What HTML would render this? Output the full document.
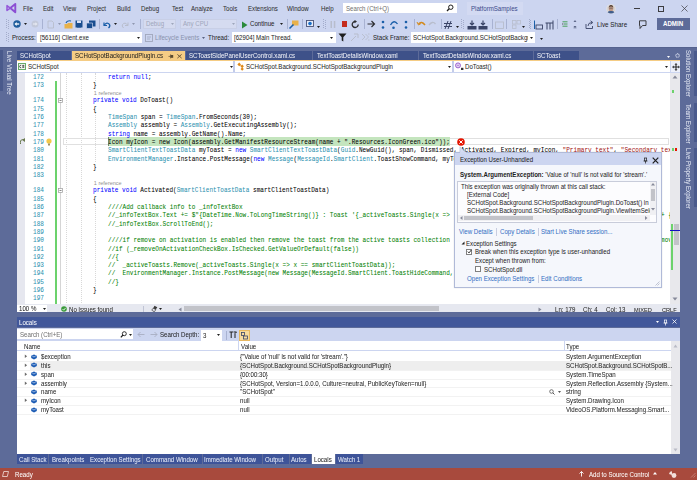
<!DOCTYPE html>
<html><head><meta charset="utf-8"><style>
html,body{margin:0;padding:0;}
body{width:697px;height:480px;position:relative;overflow:hidden;background:#5D6B99;font-family:"Liberation Sans", sans-serif;}
.t{position:absolute;white-space:pre;line-height:1;font-family:"Liberation Sans", sans-serif;transform:scaleX(0.915);transform-origin:0 50%;-webkit-text-stroke:0.03px;}
.v{position:absolute;white-space:pre;line-height:1;font-family:"Liberation Sans", sans-serif;writing-mode:vertical-rl;transform:scaleY(0.92);transform-origin:50% 0;}
.m{position:absolute;white-space:pre;line-height:1;font-family:"Liberation Mono", monospace;transform:scaleX(0.93);transform-origin:0 50%;-webkit-text-stroke:0.04px;}
svg{overflow:visible}
</style></head><body><div style="position:absolute;left:0;top:0;width:697px;height:480px;filter:blur(0.25px)">
<div style="position:absolute;left:0px;top:0px;width:697px;height:47px;background:#CCD5F0;"></div>
<svg style="position:absolute;left:0px;top:0px;" width="20" height="16" viewBox="0 0 20 16"><path d="M15.3 3.9 L15.3 12.2 L10.3 8.05 Z" fill="none" stroke="#8C4FD3" stroke-width="1.9" stroke-linejoin="round"/><path d="M7 5.6 L7 10.5 L10.3 8.05 Z" fill="none" stroke="#9457DA" stroke-width="1.5" stroke-linejoin="round"/></svg>
<div class="t" style="left:23.1px;top:5.99px;font-size:6.70px;color:#2E2E2E;">File</div>
<div class="t" style="left:42.7px;top:5.99px;font-size:6.70px;color:#2E2E2E;">Edit</div>
<div class="t" style="left:63.3px;top:5.99px;font-size:6.70px;color:#2E2E2E;">View</div>
<div class="t" style="left:87.2px;top:5.99px;font-size:6.70px;color:#2E2E2E;">Project</div>
<div class="t" style="left:116.8px;top:5.99px;font-size:6.70px;color:#2E2E2E;">Build</div>
<div class="t" style="left:141.2px;top:5.99px;font-size:6.70px;color:#2E2E2E;">Debug</div>
<div class="t" style="left:172.4px;top:5.99px;font-size:6.70px;color:#2E2E2E;">Test</div>
<div class="t" style="left:191.3px;top:5.99px;font-size:6.70px;color:#2E2E2E;">Analyze</div>
<div class="t" style="left:223.2px;top:5.99px;font-size:6.70px;color:#2E2E2E;">Tools</div>
<div class="t" style="left:247.9px;top:5.99px;font-size:6.70px;color:#2E2E2E;">Extensions</div>
<div class="t" style="left:286.8px;top:5.99px;font-size:6.70px;color:#2E2E2E;">Window</div>
<div class="t" style="left:320.5px;top:5.99px;font-size:6.70px;color:#2E2E2E;">Help</div>
<div style="position:absolute;left:343px;top:3px;width:114px;height:10px;background:#FFFFFF;"></div>
<div class="t" style="left:346px;top:5.79px;font-size:6.70px;color:#717171;">Search (Ctrl+Q)</div>
<svg style="position:absolute;left:446px;top:4px;" width="8" height="8" viewBox="0 0 8 8"><circle cx="4.8" cy="3.2" r="2.2" fill="none" stroke="#1E1E1E" stroke-width="1"/><path d="M3.2 4.8 L1 7" stroke="#1E1E1E" stroke-width="1.3"/></svg>
<div style="position:absolute;left:466.5px;top:2px;width:56.2px;height:12.8px;background:#D3DAF2;"></div>
<div class="t" style="left:470.5px;top:5.99px;font-size:6.70px;color:#3D4C8C;">PlatformSamples</div>
<svg style="position:absolute;left:606px;top:3.5px;" width="10" height="10" viewBox="0 0 10 10"><circle cx="5" cy="5" r="4.8" fill="#E4E2E6"/><circle cx="5" cy="5" r="4.3" fill="#D8D4D2"/><ellipse cx="5" cy="4.6" rx="2.3" ry="3" fill="#BE9886"/><path d="M2.6 3.6 Q2.8 0.8 5 0.9 Q7.3 0.8 7.4 3.6 Q6.5 2.2 5 2.4 Q3.5 2.2 2.6 3.6 Z" fill="#4A382E"/><path d="M3.3 4.2 L6.7 4.2" stroke="#3A3A3A" stroke-width="0.5"/><path d="M1.6 8.3 Q2.5 6.8 5 7.1 Q7.5 6.8 8.4 8.3 Q6.9 9.6 5 9.6 Q3.1 9.6 1.6 8.3 Z" fill="#3F5D8C"/></svg>
<div style="position:absolute;left:634px;top:8px;width:6px;height:0.7px;background:#3C3C40;"></div>
<div style="position:absolute;left:658px;top:5.5px;width:6px;height:6px;background:none;border:0.7px solid #3C3C40;box-sizing:border-box"></div>
<svg style="position:absolute;left:681px;top:5px;" width="7" height="7" viewBox="0 0 7 7"><path d="M0.5 0.5 L6.5 6.5 M6.5 0.5 L0.5 6.5" stroke="#3C3C40" stroke-width="0.7"/></svg>
<div style="position:absolute;left:6px;top:19px;width:0.9px;height:0.9px;background:#A3ACCB;"></div>
<div style="position:absolute;left:7.5px;top:20px;width:0.9px;height:0.9px;background:#A3ACCB;"></div>
<div style="position:absolute;left:6px;top:21px;width:0.9px;height:0.9px;background:#A3ACCB;"></div>
<div style="position:absolute;left:7.5px;top:22px;width:0.9px;height:0.9px;background:#A3ACCB;"></div>
<div style="position:absolute;left:6px;top:23px;width:0.9px;height:0.9px;background:#A3ACCB;"></div>
<div style="position:absolute;left:7.5px;top:24px;width:0.9px;height:0.9px;background:#A3ACCB;"></div>
<div style="position:absolute;left:6px;top:25px;width:0.9px;height:0.9px;background:#A3ACCB;"></div>
<div style="position:absolute;left:7.5px;top:26px;width:0.9px;height:0.9px;background:#A3ACCB;"></div>
<div style="position:absolute;left:6px;top:27px;width:0.9px;height:0.9px;background:#A3ACCB;"></div>
<div style="position:absolute;left:7.5px;top:28px;width:0.9px;height:0.9px;background:#A3ACCB;"></div>
<svg style="position:absolute;left:12.8px;top:20.2px;" width="8" height="8" viewBox="0 0 8 8"><circle cx="4" cy="4" r="3.7" fill="#1F5C9C"/><path d="M6.2 4 L3 4" stroke="#fff" stroke-width="1.3"/><path d="M1.5 4 L3.6 2 L3.6 6 Z" fill="#fff"/></svg>
<svg style="position:absolute;left:24.0px;top:23px;" width="3" height="2" viewBox="0 0 3 2"><path d="M0 0 L3 0 L1.5 2 Z" fill="#1E1E1E"/></svg>
<svg style="position:absolute;left:30.5px;top:20.2px;" width="8" height="8" viewBox="0 0 8 8"><circle cx="4" cy="4" r="3.5" fill="#C3C9DA"/><path d="M2 4 L5 4" stroke="#E6E9F2" stroke-width="1.2"/><path d="M6.5 4 L4.4 2.2 L4.4 5.8 Z" fill="#E6E9F2"/></svg>
<div style="position:absolute;left:41.5px;top:19px;width:1px;height:10px;background:#A8B2D2;"></div>
<svg style="position:absolute;left:47px;top:20px;" width="7" height="9" viewBox="0 0 7 9"><path d="M1 1 L5 1 L6.5 2.5 L6.5 8 L1 8 Z" fill="none" stroke="#B8BDCC" stroke-width="0.9"/></svg>
<svg style="position:absolute;left:57.9px;top:23px;" width="3" height="2" viewBox="0 0 3 2"><path d="M0 0 L3 0 L1.5 2 Z" fill="#9098B0"/></svg>
<svg style="position:absolute;left:64px;top:19.5px;" width="9" height="9" viewBox="0 0 9 9"><path d="M0.5 4 L3 4 L4 3 L8.5 3 L8.5 8.5 L0.5 8.5 Z" fill="#E8B14A"/><path d="M2 3 Q3 0 7 1" stroke="#1A5FA8" stroke-width="1.2" fill="none"/></svg>
<svg style="position:absolute;left:75px;top:20px;" width="8" height="8" viewBox="0 0 8 8"><path d="M0.5 0.5 L7.5 0.5 L7.5 7.5 L0.5 7.5 Z" fill="#1A4E8F"/><rect x="2" y="0.5" width="4" height="2.5" fill="#DDE3F5"/><rect x="2" y="5" width="4" height="2.5" fill="#1A4E8F"/></svg>
<svg style="position:absolute;left:86px;top:19.5px;" width="10" height="9" viewBox="0 0 10 9"><path d="M3 0.5 L9.5 0.5 L9.5 6.5 L3 6.5 Z" fill="#1A4E8F"/><path d="M0.5 3 L6.5 3 L6.5 8.5 L0.5 8.5 Z" fill="#1A4E8F" stroke="#DDE3F5" stroke-width="0.6"/></svg>
<div style="position:absolute;left:98.5px;top:19px;width:1px;height:10px;background:#A8B2D2;"></div>
<svg style="position:absolute;left:102px;top:20px;" width="9" height="9" viewBox="0 0 9 9"><path d="M2 2.5 L2 5.5 L5 5.5" stroke="#1A5FA8" stroke-width="1.2" fill="none"/><path d="M2.2 5.2 Q5 1.5 7.5 4.5 Q8.5 6 6.5 8" stroke="#1A5FA8" stroke-width="1.3" fill="none"/></svg>
<svg style="position:absolute;left:114.2px;top:23px;" width="3" height="2" viewBox="0 0 3 2"><path d="M0 0 L3 0 L1.5 2 Z" fill="#1E1E1E"/></svg>
<svg style="position:absolute;left:121px;top:20px;" width="9" height="9" viewBox="0 0 9 9"><path d="M7 2.5 L7 5.5 L4 5.5" stroke="#B8BDCC" stroke-width="1" fill="none"/><path d="M6.8 5.2 Q4 1.5 1.5 4.5 Q0.5 6 2.5 8" stroke="#B8BDCC" stroke-width="1" fill="none"/></svg>
<svg style="position:absolute;left:132.3px;top:23px;" width="3" height="2" viewBox="0 0 3 2"><path d="M0 0 L3 0 L1.5 2 Z" fill="#9098B0"/></svg>
<div style="position:absolute;left:139.7px;top:19px;width:1px;height:10px;background:#A8B2D2;"></div>
<div style="position:absolute;left:143px;top:18.5px;width:33px;height:10.5px;background:#D5DBF0;border:0.6px solid #C8CFE6;box-sizing:border-box"></div>
<div class="t" style="left:146px;top:21.39px;font-size:6.70px;color:#A0A7BC;">Debug</div>
<svg style="position:absolute;left:170.5px;top:23px;" width="3" height="2" viewBox="0 0 3 2"><path d="M0 0 L3 0 L1.5 2 Z" fill="#A0A7BC"/></svg>
<div style="position:absolute;left:180px;top:18.5px;width:57px;height:10.5px;background:#D5DBF0;border:0.6px solid #C8CFE6;box-sizing:border-box"></div>
<div class="t" style="left:183px;top:21.39px;font-size:6.70px;color:#A0A7BC;">Any CPU</div>
<svg style="position:absolute;left:231.5px;top:23px;" width="3" height="2" viewBox="0 0 3 2"><path d="M0 0 L3 0 L1.5 2 Z" fill="#A0A7BC"/></svg>
<svg style="position:absolute;left:241px;top:20.5px;" width="7" height="8" viewBox="0 0 7 8"><path d="M1 0.5 L6.5 4 L1 7.5 Z" fill="#2A8A3A"/></svg>
<div class="t" style="left:250px;top:21.39px;font-size:6.70px;color:#1E1E1E;">Continue</div>
<svg style="position:absolute;left:280.1px;top:23px;" width="3" height="2" viewBox="0 0 3 2"><path d="M0 0 L3 0 L1.5 2 Z" fill="#1E1E1E"/></svg>
<div style="position:absolute;left:286.6px;top:19px;width:1px;height:10px;background:#A8B2D2;"></div>
<svg style="position:absolute;left:289px;top:19.5px;" width="10" height="9" viewBox="0 0 10 9"><rect x="3" y="0.5" width="6.5" height="5" fill="#E8B14A"/><path d="M0.5 8.5 L4.5 4.5" stroke="#1A5FA8" stroke-width="1.6"/></svg>
<div style="position:absolute;left:302px;top:19px;width:1px;height:10px;background:#A8B2D2;"></div>
<svg style="position:absolute;left:305.5px;top:20px;" width="8" height="7" viewBox="0 0 8 7"><rect x="0.5" y="0.5" width="7" height="6" fill="#E9EDF8" stroke="#4A5478" stroke-width="0.9"/><circle cx="4" cy="3.6" r="1.8" fill="#1A6FC8"/></svg>
<svg style="position:absolute;left:317.1px;top:26px;" width="3" height="2" viewBox="0 0 3 2"><path d="M0 0 L3 0 L1.5 2 Z" fill="#1E1E1E"/></svg>
<div style="position:absolute;left:323px;top:19px;width:0.9px;height:0.9px;background:#A3ACCB;"></div>
<div style="position:absolute;left:324.5px;top:20px;width:0.9px;height:0.9px;background:#A3ACCB;"></div>
<div style="position:absolute;left:323px;top:21px;width:0.9px;height:0.9px;background:#A3ACCB;"></div>
<div style="position:absolute;left:324.5px;top:22px;width:0.9px;height:0.9px;background:#A3ACCB;"></div>
<div style="position:absolute;left:323px;top:23px;width:0.9px;height:0.9px;background:#A3ACCB;"></div>
<div style="position:absolute;left:324.5px;top:24px;width:0.9px;height:0.9px;background:#A3ACCB;"></div>
<div style="position:absolute;left:323px;top:25px;width:0.9px;height:0.9px;background:#A3ACCB;"></div>
<div style="position:absolute;left:324.5px;top:26px;width:0.9px;height:0.9px;background:#A3ACCB;"></div>
<div style="position:absolute;left:323px;top:27px;width:0.9px;height:0.9px;background:#A3ACCB;"></div>
<div style="position:absolute;left:324.5px;top:28px;width:0.9px;height:0.9px;background:#A3ACCB;"></div>
<svg style="position:absolute;left:330px;top:20.5px;" width="6" height="7" viewBox="0 0 6 7"><rect x="0.5" y="0" width="1.5" height="7" fill="#B8BDCC"/><rect x="3.8" y="0" width="1.5" height="7" fill="#B8BDCC"/></svg>
<div style="position:absolute;left:341.5px;top:21px;width:5.5px;height:5.5px;background:#C42B1C;"></div>
<svg style="position:absolute;left:351px;top:19.5px;" width="9" height="9" viewBox="0 0 9 9"><path d="M7.2 4.5 A3 3 0 1 1 4.5 1.5" stroke="#2D2D30" stroke-width="1.3" fill="none"/><path d="M3.5 0 L6 1.6 L3.5 3.2 Z" fill="#2D2D30"/></svg>
<div style="position:absolute;left:363.9px;top:19px;width:1px;height:10px;background:#A8B2D2;"></div>
<svg style="position:absolute;left:367px;top:20px;" width="9" height="8" viewBox="0 0 9 8"><path d="M0.5 4 L7.5 4 M4.5 1 L7.5 4 L4.5 7" stroke="#2D2D30" stroke-width="1.2" fill="none"/></svg>
<svg style="position:absolute;left:380px;top:19.5px;" width="6" height="10" viewBox="0 0 6 10"><circle cx="3" cy="2" r="1.3" fill="#1A5FA8"/><circle cx="3" cy="7.5" r="1.3" fill="#1A5FA8"/></svg>
<svg style="position:absolute;left:389px;top:19.5px;" width="10" height="10" viewBox="0 0 10 10"><path d="M1.5 5 Q5 -1 8.5 4" stroke="#1A5FA8" stroke-width="1.3" fill="none"/><circle cx="4.5" cy="7.8" r="1.3" fill="#1A5FA8"/></svg>
<svg style="position:absolute;left:402.5px;top:19.5px;" width="6" height="10" viewBox="0 0 6 10"><circle cx="3" cy="2" r="1.3" fill="#1A5FA8"/><circle cx="3" cy="7.5" r="1.3" fill="#1A5FA8"/></svg>
<div style="position:absolute;left:413.8px;top:19px;width:1px;height:10px;background:#A8B2D2;"></div>
<svg style="position:absolute;left:417px;top:20px;" width="9" height="8" viewBox="0 0 9 8"><path d="M1.5 4 Q4.5 0.5 8 5" stroke="#D38A1E" stroke-width="1.5" fill="none"/><path d="M0 2 L1.5 5 L4 3.5" stroke="#D38A1E" stroke-width="1" fill="none"/></svg>
<svg style="position:absolute;left:428px;top:20px;" width="9" height="8" viewBox="0 0 9 8"><path d="M7.5 4 Q4.5 0.5 1 5" stroke="#B8BDCC" stroke-width="1.3" fill="none"/></svg>
<div style="position:absolute;left:440.5px;top:19px;width:1px;height:10px;background:#A8B2D2;"></div>
<svg style="position:absolute;left:443px;top:19.5px;" width="10" height="10" viewBox="0 0 10 10"><path d="M2 9 L5 1 M5 9 L8 1 M1 3.5 L9 3.5 M1 6.5 L9 6.5" stroke="#3A4466" stroke-width="1"/></svg>
<svg style="position:absolute;left:456.2px;top:26px;" width="3" height="2" viewBox="0 0 3 2"><path d="M0 0 L3 0 L1.5 2 Z" fill="#1E1E1E"/></svg>
<div style="position:absolute;left:461px;top:19px;width:0.9px;height:0.9px;background:#A3ACCB;"></div>
<div style="position:absolute;left:462.5px;top:20px;width:0.9px;height:0.9px;background:#A3ACCB;"></div>
<div style="position:absolute;left:461px;top:21px;width:0.9px;height:0.9px;background:#A3ACCB;"></div>
<div style="position:absolute;left:462.5px;top:22px;width:0.9px;height:0.9px;background:#A3ACCB;"></div>
<div style="position:absolute;left:461px;top:23px;width:0.9px;height:0.9px;background:#A3ACCB;"></div>
<div style="position:absolute;left:462.5px;top:24px;width:0.9px;height:0.9px;background:#A3ACCB;"></div>
<div style="position:absolute;left:461px;top:25px;width:0.9px;height:0.9px;background:#A3ACCB;"></div>
<div style="position:absolute;left:462.5px;top:26px;width:0.9px;height:0.9px;background:#A3ACCB;"></div>
<div style="position:absolute;left:461px;top:27px;width:0.9px;height:0.9px;background:#A3ACCB;"></div>
<div style="position:absolute;left:462.5px;top:28px;width:0.9px;height:0.9px;background:#A3ACCB;"></div>
<svg style="position:absolute;left:467px;top:19.5px;" width="10" height="10" viewBox="0 0 10 10"><rect x="0.5" y="6" width="9" height="3.5" fill="#3A4466"/><path d="M5 0.5 L5 5 M3 3 L5 5 L7 3" stroke="#3A4466" stroke-width="1.2" fill="none"/></svg>
<svg style="position:absolute;left:478px;top:19.5px;" width="10" height="10" viewBox="0 0 10 10"><rect x="0.5" y="6" width="9" height="3.5" fill="#3A4466"/><path d="M5 0.5 L5 5 M3 3 L5 5 L7 3" stroke="#3A4466" stroke-width="1.2" fill="none"/></svg>
<div style="position:absolute;left:492px;top:19px;width:1px;height:10px;background:#A8B2D2;"></div>
<svg style="position:absolute;left:495px;top:20px;" width="9" height="9" viewBox="0 0 9 9"><rect x="0.5" y="2" width="8" height="6.5" fill="none" stroke="#B8BDCC" stroke-width="0.9"/></svg>
<div style="position:absolute;left:505.6px;top:19px;width:1px;height:10px;background:#A8B2D2;"></div>
<svg style="position:absolute;left:512px;top:20px;" width="9" height="9" viewBox="0 0 9 9"><rect x="0.5" y="0.5" width="3.5" height="3.5" fill="none" stroke="#B8BDCC" stroke-width="0.8"/><rect x="5" y="0.5" width="3.5" height="3.5" fill="none" stroke="#B8BDCC" stroke-width="0.8"/><rect x="0.5" y="5" width="3.5" height="3.5" fill="none" stroke="#B8BDCC" stroke-width="0.8"/></svg>
<svg style="position:absolute;left:522.3px;top:26px;" width="3" height="2" viewBox="0 0 3 2"><path d="M0 0 L3 0 L1.5 2 Z" fill="#1E1E1E"/></svg>
<div style="position:absolute;left:528.5px;top:19px;width:0.9px;height:0.9px;background:#A3ACCB;"></div>
<div style="position:absolute;left:530.0px;top:20px;width:0.9px;height:0.9px;background:#A3ACCB;"></div>
<div style="position:absolute;left:528.5px;top:21px;width:0.9px;height:0.9px;background:#A3ACCB;"></div>
<div style="position:absolute;left:530.0px;top:22px;width:0.9px;height:0.9px;background:#A3ACCB;"></div>
<div style="position:absolute;left:528.5px;top:23px;width:0.9px;height:0.9px;background:#A3ACCB;"></div>
<div style="position:absolute;left:530.0px;top:24px;width:0.9px;height:0.9px;background:#A3ACCB;"></div>
<div style="position:absolute;left:528.5px;top:25px;width:0.9px;height:0.9px;background:#A3ACCB;"></div>
<div style="position:absolute;left:530.0px;top:26px;width:0.9px;height:0.9px;background:#A3ACCB;"></div>
<div style="position:absolute;left:528.5px;top:27px;width:0.9px;height:0.9px;background:#A3ACCB;"></div>
<div style="position:absolute;left:530.0px;top:28px;width:0.9px;height:0.9px;background:#A3ACCB;"></div>
<svg style="position:absolute;left:533px;top:19.5px;" width="10" height="10" viewBox="0 0 10 10"><path d="M1.5 0.5 L1.5 9" stroke="#1A5FA8" stroke-width="1"/><rect x="3" y="5" width="6.5" height="4" fill="none" stroke="#3A4466" stroke-width="0.9"/></svg>
<svg style="position:absolute;left:545px;top:19.5px;" width="10" height="10" viewBox="0 0 10 10"><path d="M0.5 3 L8 3 M2 3 L2 9.5 M5 3 L5 9.5 M8 0.5 L8 9.5" stroke="#3A4466" stroke-width="1"/></svg>
<div style="position:absolute;left:556.8px;top:19px;width:1px;height:10px;background:#A8B2D2;"></div>
<svg style="position:absolute;left:562px;top:21px;" width="6" height="6" viewBox="0 0 6 6"><path d="M0.5 0.8 L5.5 0.8 M2 3 L5.5 3 M0.5 5.2 L5.5 5.2" stroke="#3A9A4A" stroke-width="0.9"/><path d="M0.5 2 L1.6 3 L0.5 4 Z" fill="#333"/></svg>
<svg style="position:absolute;left:572.5px;top:20px;" width="4" height="9" viewBox="0 0 4 9"><path d="M0.5 1.8 L3.5 1.8 L2 0.3 Z M0.5 6.2 L3.5 6.2 L2 7.7 Z" fill="#3A4466"/><path d="M0.5 7.9 L3.5 7.9" stroke="#3A4466" stroke-width="0.5"/></svg>
<svg style="position:absolute;left:585px;top:19.5px;" width="9" height="9" viewBox="0 0 9 9"><path d="M1 4 L1 8.5 L7.5 8.5 L7.5 6" stroke="#3A4466" stroke-width="0.9" fill="none"/><path d="M3 6 Q3 2.5 7 2.5 M5.5 0.8 L7.8 2.5 L5.5 4.2" stroke="#3A4466" stroke-width="0.9" fill="none"/></svg>
<div class="t" style="left:597px;top:21.71px;font-size:6.92px;color:#1E1E1E;">Live Share</div>
<svg style="position:absolute;left:636.5px;top:19.5px;" width="10" height="10" viewBox="0 0 10 10"><path d="M2.5 0.8 L9 0.8 L9 5.5 L5.5 5.5 L3 8.5 L3 5.5 L2.5 5.5 Z" fill="none" stroke="#2D2D30" stroke-width="0.9"/></svg>
<div style="position:absolute;left:657px;top:18px;width:32.5px;height:11.5px;background:#5D6B99;"></div>
<div class="t" style="left:662.5px;top:21.49px;font-size:6.70px;color:#FFFFFF;font-weight:bold">ADMIN</div>
<div style="position:absolute;left:6px;top:32px;width:0.9px;height:0.9px;background:#A3ACCB;"></div>
<div style="position:absolute;left:7.5px;top:33px;width:0.9px;height:0.9px;background:#A3ACCB;"></div>
<div style="position:absolute;left:6px;top:34px;width:0.9px;height:0.9px;background:#A3ACCB;"></div>
<div style="position:absolute;left:7.5px;top:35px;width:0.9px;height:0.9px;background:#A3ACCB;"></div>
<div style="position:absolute;left:6px;top:36px;width:0.9px;height:0.9px;background:#A3ACCB;"></div>
<div style="position:absolute;left:7.5px;top:37px;width:0.9px;height:0.9px;background:#A3ACCB;"></div>
<div style="position:absolute;left:6px;top:38px;width:0.9px;height:0.9px;background:#A3ACCB;"></div>
<div style="position:absolute;left:7.5px;top:39px;width:0.9px;height:0.9px;background:#A3ACCB;"></div>
<div style="position:absolute;left:6px;top:40px;width:0.9px;height:0.9px;background:#A3ACCB;"></div>
<div style="position:absolute;left:7.5px;top:41px;width:0.9px;height:0.9px;background:#A3ACCB;"></div>
<div class="t" style="left:11.5px;top:35.09px;font-size:6.70px;color:#1E1E1E;">Process:</div>
<div style="position:absolute;left:37px;top:32.3px;width:105px;height:10.6px;background:#FFFFFF;"></div>
<div class="t" style="left:39.5px;top:35.19px;font-size:6.70px;color:#1E1E1E;">[56116] Client.exe</div>
<svg style="position:absolute;left:136.5px;top:36.6px;" width="3" height="2" viewBox="0 0 3 2"><path d="M0 0 L3 0 L1.5 2 Z" fill="#1E1E1E"/></svg>
<svg style="position:absolute;left:145px;top:33.5px;" width="8" height="8" viewBox="0 0 8 8"><rect x="0.5" y="0.5" width="7" height="7" fill="none" stroke="#A0A7BC" stroke-width="0.9"/><path d="M2 3 L6 3 M2 5 L5 5" stroke="#A0A7BC" stroke-width="0.8"/></svg>
<div class="t" style="left:154.6px;top:35.19px;font-size:6.70px;color:#8A93AE;">Lifecycle Events</div>
<svg style="position:absolute;left:201.9px;top:36.6px;" width="3" height="2" viewBox="0 0 3 2"><path d="M0 0 L3 0 L1.5 2 Z" fill="#5A6280"/></svg>
<div class="t" style="left:208px;top:35.19px;font-size:6.70px;color:#1E1E1E;">Thread:</div>
<div style="position:absolute;left:231.5px;top:32.3px;width:104.5px;height:10.6px;background:#FFFFFF;"></div>
<div class="t" style="left:233.8px;top:35.19px;font-size:6.70px;color:#1E1E1E;">[62904] Main Thread.</div>
<svg style="position:absolute;left:330.3px;top:36.6px;" width="3" height="2" viewBox="0 0 3 2"><path d="M0 0 L3 0 L1.5 2 Z" fill="#1E1E1E"/></svg>
<svg style="position:absolute;left:338px;top:33px;" width="9" height="9" viewBox="0 0 9 9"><path d="M0.5 0.5 L8.5 0.5 L5.3 4.2 L5.3 8.5 L3.7 7.5 L3.7 4.2 Z" fill="#1E1E1E"/></svg>
<svg style="position:absolute;left:349.5px;top:33px;" width="9" height="9" viewBox="0 0 9 9"><path d="M1 8 L6 3 M4 1 L8 1 L8 5" stroke="#B8BDCC" stroke-width="1" fill="none"/></svg>
<svg style="position:absolute;left:361px;top:33px;" width="9" height="9" viewBox="0 0 9 9"><path d="M1 1 L4 4 L1 7 M4.5 1 L7.5 4 L4.5 7 M7 1 L8.5 1 M7 7 L8.5 7" stroke="#B8BDCC" stroke-width="0.9" fill="none"/></svg>
<div class="t" style="left:372.9px;top:35.19px;font-size:6.70px;color:#1E1E1E;">Stack Frame:</div>
<div style="position:absolute;left:411px;top:32.3px;width:123.5px;height:10.6px;background:#FFFFFF;"></div>
<div style="position:absolute;left:413px;top:32px;width:115px;height:11px;overflow:hidden"><div class="t" style="left:0;top:2.6px;font-size:6.7px;color:#1E1E1E">SCHotSpot.Background.SCHotSpotBackgroundPlugin.DoToast()</div></div>
<svg style="position:absolute;left:529.8px;top:36.6px;" width="3" height="2" viewBox="0 0 3 2"><path d="M0 0 L3 0 L1.5 2 Z" fill="#1E1E1E"/></svg>
<svg style="position:absolute;left:539.5px;top:38px;" width="3" height="2" viewBox="0 0 3 2"><path d="M0 0 L3 0 L1.5 2 Z" fill="#1E1E1E"/></svg>
<div style="position:absolute;left:0px;top:49.8px;width:3px;height:41.5px;background:#4A5A8C;"></div>
<div class="v" style="left:5.2px;top:51px;font-size:6.7px;color:#E8ECF7;writing-mode:vertical-rl">Live Visual Tree</div>
<div style="position:absolute;left:694px;top:50.6px;width:3px;height:45.5px;background:#4A5A8C;"></div>
<div style="position:absolute;left:694px;top:103px;width:3px;height:38.5px;background:#4A5A8C;"></div>
<div style="position:absolute;left:694px;top:147.5px;width:3px;height:59px;background:#4A5A8C;"></div>
<div class="v" style="left:684px;top:50px;font-size:6.7px;color:#E8ECF7;writing-mode:vertical-rl">Solution Explorer</div>
<div class="v" style="left:684px;top:103.5px;font-size:6.7px;color:#E8ECF7;writing-mode:vertical-rl">Team Explorer</div>
<div class="v" style="left:684px;top:148px;font-size:6.7px;color:#E8ECF7;writing-mode:vertical-rl">Live Property Explorer</div>
<div style="position:absolute;left:17px;top:51px;width:54.400000000000006px;height:9px;background:#3E5189;"></div>
<div class="t" style="left:19.5px;top:53.19px;font-size:6.70px;color:#F0F2F8;">SCHotSpot</div>
<div style="position:absolute;left:186px;top:51px;width:126px;height:9px;background:#3E5189;"></div>
<div class="t" style="left:188.5px;top:53.19px;font-size:6.70px;color:#F0F2F8;">SCToastSidePanelUserControl.xaml.cs</div>
<div style="position:absolute;left:313px;top:51px;width:105px;height:9px;background:#3E5189;"></div>
<div class="t" style="left:316.6px;top:53.19px;font-size:6.70px;color:#F0F2F8;">TextToastDetailsWindow.xaml</div>
<div style="position:absolute;left:419px;top:51px;width:113.70000000000005px;height:9px;background:#3E5189;"></div>
<div class="t" style="left:423.4px;top:53.19px;font-size:6.70px;color:#F0F2F8;">TextToastDetailsWindow.xaml.cs</div>
<div style="position:absolute;left:533.7px;top:51px;width:45.5px;height:9px;background:#3E5189;"></div>
<div class="t" style="left:536.6px;top:53.19px;font-size:6.70px;color:#F0F2F8;">SCToast</div>
<div style="position:absolute;left:72.4px;top:50.6px;width:112.5px;height:10px;background:#F5CC84;"></div>
<div class="t" style="left:75px;top:53.19px;font-size:6.70px;color:#1E1E1E;">SCHotSpotBackgroundPlugin.cs</div>
<svg style="position:absolute;left:167.5px;top:53.5px;" width="6" height="5" viewBox="0 0 6 5"><rect x="2.6" y="1" width="2.6" height="2.8" fill="#5A4A30"/><path d="M0.5 2.4 L2.6 2.4 M2.6 0.4 L2.6 4.4" stroke="#5A4A30" stroke-width="0.7"/></svg>
<svg style="position:absolute;left:177.3px;top:54px;" width="5" height="4.5" viewBox="0 0 5 4.5"><path d="M0.4 0.4 L4.6 4.1 M4.6 0.4 L0.4 4.1" stroke="#5A4A30" stroke-width="0.9"/></svg>
<svg style="position:absolute;left:666.8px;top:55.5px;" width="3" height="2" viewBox="0 0 3 2"><path d="M0 0 L3 0 L1.5 2 Z" fill="#FFFFFF"/></svg>
<svg style="position:absolute;left:674.5px;top:52.5px;" width="5" height="5" viewBox="0 0 5 5"><circle cx="2.5" cy="2.5" r="1.7" fill="none" stroke="#D8DEF0" stroke-width="1.1" stroke-dasharray="0.9 0.45"/></svg>
<div style="position:absolute;left:0px;top:47px;width:697px;height:1px;background:#55638F;"></div>
<div style="position:absolute;left:17px;top:60px;width:663px;height:1px;background:#F5CC84;"></div>
<div style="position:absolute;left:17px;top:61px;width:663px;height:11px;background:#FFFFFF;"></div>
<div style="position:absolute;left:17px;top:72px;width:663px;height:1px;background:#CCD5F0;"></div>
<svg style="position:absolute;left:18.4px;top:63.2px;" width="8" height="7" viewBox="0 0 8 7"><rect x="0.5" y="0.5" width="7" height="6" fill="#F4F8F2" stroke="#6AAA6A" stroke-width="1"/><path d="M3.2 2.2 Q1.6 2.2 1.6 3.5 Q1.6 4.8 3.2 4.8" stroke="#333" stroke-width="0.8" fill="none"/><path d="M4.2 2.6 L6.3 2.6 M4.2 4.2 L6.3 4.2 M4.9 1.8 L4.9 5 M5.7 1.8 L5.7 5" stroke="#333" stroke-width="0.5"/></svg>
<div class="t" style="left:27.8px;top:64.09px;font-size:6.70px;color:#1E1E1E;">SCHotSpot</div>
<svg style="position:absolute;left:229.5px;top:65.5px;" width="3" height="2" viewBox="0 0 3 2"><path d="M0 0 L3 0 L1.5 2 Z" fill="#1E1E1E"/></svg>
<div style="position:absolute;left:233.2px;top:61px;width:1.6px;height:11px;background:#C3CCEA;"></div>
<svg style="position:absolute;left:237px;top:62px;" width="8" height="9" viewBox="0 0 8 9"><path d="M2.2 0.6 L4 2.4 L2.2 4.2 L0.4 2.4 Z" fill="#E08A1A"/><path d="M5.2 2.6 L6.9 4.3 L5.2 6 L3.5 4.3 Z" fill="#E08A1A"/><path d="M5.2 5.4 L6.9 7.1 L5.2 8.8 L3.5 7.1 Z" fill="#E08A1A"/><path d="M2.2 3 L5 4.3 L5 7" stroke="#E08A1A" stroke-width="0.6" fill="none"/></svg>
<div class="t" style="left:245.8px;top:64.09px;font-size:6.70px;color:#1E1E1E;">SCHotSpot.Background.SCHotSpotBackgroundPlugin</div>
<svg style="position:absolute;left:448.3px;top:65.5px;" width="3" height="2" viewBox="0 0 3 2"><path d="M0 0 L3 0 L1.5 2 Z" fill="#1E1E1E"/></svg>
<div style="position:absolute;left:452.2px;top:61px;width:1.6px;height:11px;background:#C3CCEA;"></div>
<svg style="position:absolute;left:454.5px;top:62px;" width="10" height="9" viewBox="0 0 10 9"><circle cx="3" cy="3.4" r="2.5" fill="#E3D3F3" stroke="#9457C9" stroke-width="0.9"/><path d="M1.8 3.4 L4.2 3.4" stroke="#9457C9" stroke-width="0.6"/><rect x="6" y="5.8" width="2.4" height="2.2" fill="#333"/></svg>
<div class="t" style="left:465px;top:64.09px;font-size:6.70px;color:#1E1E1E;">DoToast()</div>
<svg style="position:absolute;left:665.0px;top:65.5px;" width="3" height="2" viewBox="0 0 3 2"><path d="M0 0 L3 0 L1.5 2 Z" fill="#1E1E1E"/></svg>
<div style="position:absolute;left:669.5px;top:61px;width:10.5px;height:11px;background:#EDF0FA;border-left:1px solid #CCD5F0;box-sizing:border-box"></div>
<svg style="position:absolute;left:672px;top:63px;" width="8" height="8" viewBox="0 0 8 8"><path d="M4 1.5 L4 6.5 M1.5 4 L6.5 4" stroke="#2A2A2A" stroke-width="1.1"/><path d="M4 0 L2.5 1.8 L5.5 1.8 Z M4 8 L2.5 6.2 L5.5 6.2 Z M0 4 L1.8 2.5 L1.8 5.5 Z M8 4 L6.2 2.5 L6.2 5.5 Z" fill="#2A2A2A"/></svg>
<div style="position:absolute;left:17px;top:73px;width:653px;height:232px;background:#FFFFFF;"></div>
<div style="position:absolute;left:17px;top:73px;width:8.3px;height:232px;background:#E6E7EF;"></div>
<div class="m" style="left:33.0px;top:74.87px;font-size:6.525px;color:#2B91AF">172</div>
<div class="m" style="left:33.0px;top:83.17px;font-size:6.525px;color:#2B91AF">173</div>
<div class="m" style="left:33.0px;top:98.47px;font-size:6.525px;color:#2B91AF">174</div>
<div class="m" style="left:33.0px;top:106.77px;font-size:6.525px;color:#2B91AF">175</div>
<div class="m" style="left:33.0px;top:115.07px;font-size:6.525px;color:#2B91AF">176</div>
<div class="m" style="left:33.0px;top:123.37px;font-size:6.525px;color:#2B91AF">177</div>
<div class="m" style="left:33.0px;top:131.67px;font-size:6.525px;color:#2B91AF">178</div>
<div class="m" style="left:33.0px;top:139.97px;font-size:6.525px;color:#2B91AF">179</div>
<div class="m" style="left:33.0px;top:148.27px;font-size:6.525px;color:#2B91AF">180</div>
<div class="m" style="left:33.0px;top:156.57px;font-size:6.525px;color:#2B91AF">181</div>
<div class="m" style="left:33.0px;top:164.87px;font-size:6.525px;color:#2B91AF">182</div>
<div class="m" style="left:33.0px;top:173.17px;font-size:6.525px;color:#2B91AF">183</div>
<div class="m" style="left:33.0px;top:188.47px;font-size:6.525px;color:#2B91AF">184</div>
<div class="m" style="left:33.0px;top:196.77px;font-size:6.525px;color:#2B91AF">185</div>
<div class="m" style="left:33.0px;top:205.07px;font-size:6.525px;color:#2B91AF">186</div>
<div class="m" style="left:33.0px;top:213.37px;font-size:6.525px;color:#2B91AF">187</div>
<div class="m" style="left:33.0px;top:221.67px;font-size:6.525px;color:#2B91AF">188</div>
<div class="m" style="left:33.0px;top:229.97px;font-size:6.525px;color:#2B91AF">189</div>
<div class="m" style="left:33.0px;top:238.27px;font-size:6.525px;color:#2B91AF">190</div>
<div class="m" style="left:33.0px;top:246.57px;font-size:6.525px;color:#2B91AF">191</div>
<div class="m" style="left:33.0px;top:254.87px;font-size:6.525px;color:#2B91AF">192</div>
<div class="m" style="left:33.0px;top:263.17px;font-size:6.525px;color:#2B91AF">193</div>
<div class="m" style="left:33.0px;top:271.47px;font-size:6.525px;color:#2B91AF">194</div>
<div class="m" style="left:33.0px;top:279.77px;font-size:6.525px;color:#2B91AF">195</div>
<div class="m" style="left:33.0px;top:288.07px;font-size:6.525px;color:#2B91AF">196</div>
<div class="m" style="left:33.0px;top:296.37px;font-size:6.525px;color:#2B91AF">197</div>
<div style="position:absolute;left:54.6px;top:80.6px;width:2.7px;height:223.6px;background:#6CD26C;"></div>
<div style="position:absolute;left:60.3px;top:73px;width:0.8px;height:232px;background:#D5D5D5;"></div>
<svg style="position:absolute;left:57.8px;top:97.6px;" width="5" height="5" viewBox="0 0 5 5"><rect x="0.5" y="0.5" width="4" height="4" fill="#fff" stroke="#9A9A9A" stroke-width="0.7"/><path d="M1.5 2.5 L3.5 2.5" stroke="#555" stroke-width="0.7"/></svg>
<svg style="position:absolute;left:57.8px;top:187.60000000000005px;" width="5" height="5" viewBox="0 0 5 5"><rect x="0.5" y="0.5" width="4" height="4" fill="#fff" stroke="#9A9A9A" stroke-width="0.7"/><path d="M1.5 2.5 L3.5 2.5" stroke="#555" stroke-width="0.7"/></svg>
<div style="position:absolute;left:66.00px;top:73.00px;width:0;height:232.00px;border-left:0.8px dotted #D8D8D8"></div>
<div style="position:absolute;left:80.56px;top:73.00px;width:0;height:232.00px;border-left:0.8px dotted #D8D8D8"></div>
<div style="position:absolute;left:95.13px;top:73.00px;width:0;height:7.80px;border-left:0.8px dotted #D8D8D8"></div>
<div style="position:absolute;left:95.13px;top:112.40px;width:0;height:50.10px;border-left:0.8px dotted #D8D8D8"></div>
<div style="position:absolute;left:95.13px;top:202.40px;width:0;height:83.30px;border-left:0.8px dotted #D8D8D8"></div>
<div style="position:absolute;left:63.2px;top:138.0px;width:606px;height:7.4px;background:none;border:0.8px solid #E0E0E0;box-sizing:border-box"></div>
<div style="position:absolute;left:107.892px;top:137.4px;width:342.254px;height:8.3px;background:#C4E5BE;"></div>
<div style="position:absolute;left:107.692px;top:137.4px;width:1.2px;height:8.3px;background:#6F8A6A;"></div>
<div style="position:absolute;left:0;top:0;width:669.6px;height:305px;overflow:hidden">
<div class="m" style="left:107.89px;top:74.87px;font-size:6.525px;"><span style="color:#0000FF">return</span><span style="color:#000000"> </span><span style="color:#0000FF">null</span><span style="color:#000000">;</span></div>
<div class="m" style="left:93.33px;top:83.17px;font-size:6.525px;"><span style="color:#000000">}</span></div>
<div class="t" style="left:93.83px;top:90.85px;font-size:5.5px;color:#909090;transform:none;-webkit-text-stroke:0">1 reference</div>
<div class="m" style="left:93.33px;top:98.47px;font-size:6.525px;"><span style="color:#0000FF">private</span><span style="color:#000000"> </span><span style="color:#0000FF">void</span><span style="color:#000000"> DoToast()</span></div>
<div class="m" style="left:93.33px;top:106.77px;font-size:6.525px;"><span style="color:#000000">{</span></div>
<div class="m" style="left:107.89px;top:115.07px;font-size:6.525px;"><span style="color:#2B91AF">TimeSpan</span><span style="color:#000000"> span = </span><span style="color:#2B91AF">TimeSpan</span><span style="color:#000000">.FromSeconds(30);</span></div>
<div class="m" style="left:107.89px;top:123.37px;font-size:6.525px;"><span style="color:#2B91AF">Assembly</span><span style="color:#000000"> assembly = </span><span style="color:#2B91AF">Assembly</span><span style="color:#000000">.GetExecutingAssembly();</span></div>
<div class="m" style="left:107.89px;top:131.67px;font-size:6.525px;"><span style="color:#0000FF">string</span><span style="color:#000000"> name = assembly.GetName().Name;</span></div>
<div class="m" style="left:107.89px;top:139.97px;font-size:6.525px;"><span style="color:#000000">Icon myIcon = new Icon(assembly.GetManifestResourceStream(name + &quot;.Resources.IconGreen.ico&quot;));</span></div>
<div class="m" style="left:107.89px;top:148.27px;font-size:6.525px;"><span style="color:#2B91AF">SmartClientTextToastData</span><span style="color:#000000"> myToast = </span><span style="color:#0000FF">new</span><span style="color:#000000"> </span><span style="color:#2B91AF">SmartClientTextToastData</span><span style="color:#000000">(</span><span style="color:#2B91AF">Guid</span><span style="color:#000000">.NewGuid(), span, Dismissed, Activated, Expired, myIcon, </span><span style="color:#A31515">&quot;Primary text&quot;</span><span style="color:#000000">, </span><span style="color:#A31515">&quot;Secondary text&quot;</span></div>
<div class="m" style="left:107.89px;top:156.57px;font-size:6.525px;"><span style="color:#2B91AF">EnvironmentManager</span><span style="color:#000000">.Instance.PostMessage(</span><span style="color:#0000FF">new</span><span style="color:#000000"> </span><span style="color:#2B91AF">Message</span><span style="color:#000000">(</span><span style="color:#2B91AF">MessageId</span><span style="color:#000000">.</span><span style="color:#2B91AF">SmartClient</span><span style="color:#000000">.ToastShowCommand, myToast);</span></div>
<div class="m" style="left:93.33px;top:164.87px;font-size:6.525px;"><span style="color:#000000">}</span></div>
<div class="t" style="left:93.83px;top:180.85px;font-size:5.5px;color:#909090;transform:none;-webkit-text-stroke:0">1 reference</div>
<div class="m" style="left:93.33px;top:188.47px;font-size:6.525px;"><span style="color:#0000FF">private</span><span style="color:#000000"> </span><span style="color:#0000FF">void</span><span style="color:#000000"> Activated(</span><span style="color:#2B91AF">SmartClientToastData</span><span style="color:#000000"> smartClientToastData)</span></div>
<div class="m" style="left:93.33px;top:196.77px;font-size:6.525px;"><span style="color:#000000">{</span></div>
<div class="m" style="left:107.89px;top:205.07px;font-size:6.525px;"><span style="color:#008000">////Add callback info to _infoTextBox</span></div>
<div class="m" style="left:107.89px;top:213.37px;font-size:6.525px;"><span style="color:#008000">//_infoTextBox.Text += $&quot;{DateTime.Now.ToLongTimeString()} : Toast &#x27;{_activeToasts.Single(x =&gt; </span></div>
<div class="m" style="left:107.89px;top:221.67px;font-size:6.525px;"><span style="color:#008000">//_infoTextBox.ScrollToEnd();</span></div>
<div class="m" style="left:107.89px;top:238.27px;font-size:6.525px;"><span style="color:#008000">////if remove on activation is enabled then remove the toast from the active toasts collection</span></div>
<div class="m" style="left:107.89px;top:246.57px;font-size:6.525px;"><span style="color:#008000">//if (_removeOnActivationCheckBox.IsChecked.GetValueOrDefault(false))</span></div>
<div class="m" style="left:107.89px;top:254.87px;font-size:6.525px;"><span style="color:#008000">//{</span></div>
<div class="m" style="left:107.89px;top:263.17px;font-size:6.525px;"><span style="color:#008000">//  _activeToasts.Remove(_activeToasts.Single(x =&gt; x == smartClientToastData));</span></div>
<div class="m" style="left:107.89px;top:271.47px;font-size:6.525px;"><span style="color:#008000">//  EnvironmentManager.Instance.PostMessage(new Message(MessageId.SmartClient.ToastHideCommand, null));</span></div>
<div class="m" style="left:107.89px;top:279.77px;font-size:6.525px;"><span style="color:#008000">//}</span></div>
<div class="m" style="left:93.33px;top:288.07px;font-size:6.525px;"><span style="color:#000000">}</span></div>
<div class="m" style="left:661.32px;top:213.37px;font-size:6.525px;"><span style="color:#008000">+ {</span></div>
<div class="m" style="left:661.32px;top:238.27px;font-size:6.525px;"><span style="color:#008000">mov</span></div>
</div>
<svg style="position:absolute;left:18.5px;top:138.1px;" width="7" height="7" viewBox="0 0 7 7"><path d="M5.5 1.5 Q1 1 1.5 4.5 L1.5 6" stroke="#6A7A50" stroke-width="1" fill="none"/><path d="M3 2 L6 4 L6 0 Z" fill="#6A7A50"/></svg>
<svg style="position:absolute;left:45.5px;top:137.6px;" width="6" height="8" viewBox="0 0 6 8"><circle cx="3" cy="3" r="2.6" fill="#F2C84B"/><rect x="2" y="5.5" width="2" height="2" fill="#A09060"/></svg>
<svg style="position:absolute;left:457px;top:137.6px;" width="8" height="8" viewBox="0 0 8 8"><circle cx="4" cy="4" r="3.8" fill="#E51400"/><path d="M2.3 2.3 L5.7 5.7 M5.7 2.3 L2.3 5.7" stroke="#fff" stroke-width="1"/></svg>
<div style="position:absolute;left:670px;top:73px;width:10px;height:232px;background:#E8E8EC;"></div>
<svg style="position:absolute;left:672px;top:74.5px;" width="6" height="4" viewBox="0 0 6 4"><path d="M0.5 3.5 L3 0.5 L5.5 3.5 Z" fill="#868999"/></svg>
<svg style="position:absolute;left:672px;top:296.5px;" width="6" height="4" viewBox="0 0 6 4"><path d="M0.5 0.5 L3 3.5 L5.5 0.5 Z" fill="#868999"/></svg>
<div style="position:absolute;left:671.5px;top:89.5px;width:2px;height:3.5px;background:#6CD26C;"></div>
<div style="position:absolute;left:671.5px;top:148.4px;width:2px;height:3px;background:#6CD26C;"></div>
<div style="position:absolute;left:674.8px;top:148.4px;width:2px;height:3px;background:#E51400;"></div>
<div style="position:absolute;left:670.5px;top:223.5px;width:2px;height:46.5px;background:#6CD26C;"></div>
<div style="position:absolute;left:673.5px;top:224.4px;width:5px;height:21px;background:#C2C3C9;"></div>
<div style="position:absolute;left:670px;top:229.5px;width:10px;height:1.2px;background:#1010C0;"></div>
<div style="position:absolute;left:17px;top:304.2px;width:663px;height:8px;background:#E6E8F0;"></div>
<div style="position:absolute;left:17.2px;top:304.6px;width:30px;height:7.4px;background:#FFFFFF;"></div>
<div class="t" style="left:18.5px;top:306.29px;font-size:6.70px;color:#1E1E1E;">100 %</div>
<svg style="position:absolute;left:43.0px;top:308px;" width="3" height="2" viewBox="0 0 3 2"><path d="M0 0 L3 0 L1.5 2 Z" fill="#1E1E1E"/></svg>
<svg style="position:absolute;left:61px;top:305.8px;" width="6" height="6" viewBox="0 0 6 6"><circle cx="3" cy="3" r="2.8" fill="#3A9A3A"/><path d="M1.5 3 L2.7 4.2 L4.6 1.9" stroke="#fff" stroke-width="0.8" fill="none"/></svg>
<div class="t" style="left:68.9px;top:306.59px;font-size:6.70px;color:#1E1E1E;">No issues found</div>
<div style="position:absolute;left:142.6px;top:305.5px;width:0.8px;height:6.5px;background:#C0C4D4;"></div>
<svg style="position:absolute;left:150.5px;top:305px;" width="7" height="7" viewBox="0 0 7 7"><path d="M3.5 0.8 L6.3 2.2 L4.8 4.6 L2.2 3.2 Z" fill="#3A3A3A"/><path d="M2.2 3.2 L4.8 4.6 L3.6 6.5 Q1.5 6.5 0.8 5 Z" fill="none" stroke="#3A3A3A" stroke-width="0.7"/></svg>
<svg style="position:absolute;left:159.2px;top:308px;" width="3" height="2" viewBox="0 0 3 2"><path d="M0 0 L3 0 L1.5 2 Z" fill="#1E1E1E"/></svg>
<svg style="position:absolute;left:177.5px;top:306.5px;" width="4" height="5" viewBox="0 0 4 5"><path d="M3.5 0.5 L0.5 2.5 L3.5 4.5 Z" fill="#868999"/></svg>
<div style="position:absolute;left:183.6px;top:306.3px;width:255px;height:5px;background:#C2C3C9;"></div>
<svg style="position:absolute;left:538px;top:306.5px;" width="4" height="5" viewBox="0 0 4 5"><path d="M0.5 0.5 L3.5 2.5 L0.5 4.5 Z" fill="#868999"/></svg>
<div class="t" style="left:555px;top:306.59px;font-size:6.70px;color:#1E1E1E;">Ln: 179</div>
<div class="t" style="left:583px;top:306.59px;font-size:6.70px;color:#1E1E1E;">Ch: 4</div>
<div class="t" style="left:606px;top:306.59px;font-size:6.70px;color:#1E1E1E;">Col: 13</div>
<div class="t" style="left:634px;top:306.79px;font-size:6.15px;color:#1E1E1E;">MIXED</div>
<div class="t" style="left:662px;top:306.79px;font-size:6.15px;color:#1E1E1E;">CRLF</div>
<div style="position:absolute;left:17px;top:316.8px;width:663px;height:10.7px;background:#41579A;"></div>
<div class="t" style="left:18.7px;top:319.79px;font-size:6.70px;color:#FFFFFF;">Locals</div>
<svg style="position:absolute;left:656.0px;top:321px;" width="3" height="2" viewBox="0 0 3 2"><path d="M0 0 L3 0 L1.5 2 Z" fill="#FFFFFF"/></svg>
<svg style="position:absolute;left:663px;top:318.5px;" width="5" height="7" viewBox="0 0 5 7"><path d="M1 1 L4 1 M1.5 1 L1.5 4 L3.5 4 L3.5 1 M0.5 4 L4.5 4 M2.5 4 L2.5 6.5" stroke="#fff" stroke-width="0.7" fill="none"/></svg>
<svg style="position:absolute;left:672px;top:319px;" width="5" height="5" viewBox="0 0 5 5"><path d="M0.5 0.5 L4.5 4.5 M4.5 0.5 L0.5 4.5" stroke="#fff" stroke-width="0.8"/></svg>
<div style="position:absolute;left:17px;top:327.5px;width:663px;height:13.5px;background:#CCD5F0;"></div>
<div style="position:absolute;left:17.2px;top:329.4px;width:115.8px;height:10.1px;background:#FFFFFF;"></div>
<div class="t" style="left:19.5px;top:332.09px;font-size:6.70px;color:#717171;">Search (Ctrl+E)</div>
<svg style="position:absolute;left:119.5px;top:331px;" width="7" height="7" viewBox="0 0 7 7"><circle cx="4.3" cy="2.7" r="2" fill="none" stroke="#1E1E1E" stroke-width="0.9"/><path d="M3 4 L0.8 6.3" stroke="#1E1E1E" stroke-width="1.2"/></svg>
<svg style="position:absolute;left:129.1px;top:333.5px;" width="3" height="2" viewBox="0 0 3 2"><path d="M0 0 L3 0 L1.5 2 Z" fill="#1E1E1E"/></svg>
<svg style="position:absolute;left:136.5px;top:331px;" width="8" height="7" viewBox="0 0 8 7"><path d="M7.5 3.5 L1 3.5 M3.5 1 L1 3.5 L3.5 6" stroke="#A8AEC2" stroke-width="0.9" fill="none"/></svg>
<svg style="position:absolute;left:149.5px;top:331px;" width="8" height="7" viewBox="0 0 8 7"><path d="M0.5 3.5 L7 3.5 M4.5 1 L7 3.5 L4.5 6" stroke="#A8AEC2" stroke-width="0.9" fill="none"/></svg>
<div class="t" style="left:160px;top:332.09px;font-size:6.70px;color:#1E1E1E;">Search Depth:</div>
<div style="position:absolute;left:200.6px;top:330px;width:21.4px;height:10.5px;background:#FFFFFF;"></div>
<div class="t" style="left:203.2px;top:332.79px;font-size:6.70px;color:#1E1E1E;">3</div>
<svg style="position:absolute;left:216.7px;top:334.3px;" width="3" height="2" viewBox="0 0 3 2"><path d="M0 0 L3 0 L1.5 2 Z" fill="#1E1E1E"/></svg>
<div style="position:absolute;left:226px;top:330.5px;width:0.8px;height:9px;background:#A8B2D2;"></div>
<svg style="position:absolute;left:229px;top:331px;" width="8" height="8" viewBox="0 0 8 8"><path d="M0.5 1 L4 1 M2.2 1 L2.2 7 M4.5 1 L7.5 1 L6 2.5 L6 7" stroke="#1E1E1E" stroke-width="1" fill="none"/></svg>
<div style="position:absolute;left:239.4px;top:330px;width:10.3px;height:10.5px;background:#F7DA9E;border:0.7px solid #E8B860;box-sizing:border-box"></div>
<svg style="position:absolute;left:241px;top:331.5px;" width="7" height="8" viewBox="0 0 7 8"><rect x="0.5" y="0.5" width="3" height="3" fill="none" stroke="#3A4466" stroke-width="0.8"/><rect x="2.5" y="4" width="4" height="3" fill="none" stroke="#3A4466" stroke-width="0.8"/></svg>
<div style="position:absolute;left:17px;top:341px;width:663px;height:113px;background:#FFFFFF;"></div>
<div style="position:absolute;left:17px;top:341px;width:663px;height:10px;background:#FFFFFF;border-bottom:1px solid #CCD5F0;box-sizing:border-box"></div>
<div class="t" style="left:24px;top:344.09px;font-size:6.70px;color:#1E1E1E;">Name</div>
<div style="position:absolute;left:237.6px;top:341px;width:0.8px;height:10px;background:#CCD5F0;"></div>
<div class="t" style="left:241px;top:344.09px;font-size:6.70px;color:#1E1E1E;">Value</div>
<div style="position:absolute;left:563.7px;top:341px;width:0.8px;height:10px;background:#CCD5F0;"></div>
<div class="t" style="left:566px;top:344.09px;font-size:6.70px;color:#1E1E1E;">Type</div>
<div style="position:absolute;left:670.5px;top:341px;width:9.5px;height:112.5px;background:#E8E8EC;"></div>
<svg style="position:absolute;left:672.5px;top:344px;" width="5" height="4" viewBox="0 0 5 4"><path d="M0.5 3.5 L2.5 0.5 L4.5 3.5 Z" fill="#B9BBC6"/></svg>
<svg style="position:absolute;left:672.5px;top:448px;" width="5" height="4" viewBox="0 0 5 4"><path d="M0.5 0.5 L2.5 3.5 L4.5 0.5 Z" fill="#B9BBC6"/></svg>
<div style="position:absolute;left:17px;top:360.9px;width:653.5px;height:0.6px;background:#F2F2F2;"></div>
<svg style="position:absolute;left:23.8px;top:354.2px;" width="4" height="5" viewBox="0 0 4 5"><path d="M0.8 0.5 L3.1 2.3 L0.8 4.1 Z" fill="#6A6A6A"/></svg>
<svg style="position:absolute;left:30.8px;top:353.6px;" width="6" height="6" viewBox="0 0 6 6"><path d="M3 0.4 L5.8 1.7 L5.8 4 L3 5.5 L0.2 4 L0.2 1.7 Z" fill="#1B5BB4"/><path d="M1.3 2.2 L3 3 L4.9 1.8" stroke="#E8F0FA" stroke-width="0.6" fill="none"/></svg>
<div class="t" style="left:41px;top:354.09px;font-size:6.70px;color:#1E1E1E;">$exception</div>
<div class="t" style="left:239.6px;top:354.09px;font-size:6.70px;color:#1E1E1E;">{&quot;Value of &#x27;null&#x27; is not valid for &#x27;stream&#x27;.&quot;}</div>
<div class="t" style="left:566px;top:354.09px;font-size:6.70px;color:#1E1E1E;">System.ArgumentException</div>
<div style="position:absolute;left:30px;top:360.95000000000005px;width:640.5px;height:8.8px;background:#EEEEEE;"></div>
<div style="position:absolute;left:17px;top:369.75px;width:653.5px;height:0.6px;background:#F2F2F2;"></div>
<svg style="position:absolute;left:23.8px;top:363.05px;" width="4" height="5" viewBox="0 0 4 5"><path d="M0.8 0.5 L3.1 2.3 L0.8 4.1 Z" fill="#6A6A6A"/></svg>
<svg style="position:absolute;left:30.8px;top:362.45000000000005px;" width="6" height="6" viewBox="0 0 6 6"><path d="M3 0.4 L5.8 1.7 L5.8 4 L3 5.5 L0.2 4 L0.2 1.7 Z" fill="#1B5BB4"/><path d="M1.3 2.2 L3 3 L4.9 1.8" stroke="#E8F0FA" stroke-width="0.6" fill="none"/></svg>
<div class="t" style="left:41px;top:362.94px;font-size:6.70px;color:#1E1E1E;">this</div>
<div class="t" style="left:239.6px;top:362.94px;font-size:6.70px;color:#1E1E1E;">{SCHotSpot.Background.SCHotSpotBackgroundPlugin}</div>
<div class="t" style="left:566px;top:362.94px;font-size:6.70px;color:#1E1E1E;">SCHotSpot.Background.SCHotSpotB...</div>
<div style="position:absolute;left:17px;top:378.59999999999997px;width:653.5px;height:0.6px;background:#F2F2F2;"></div>
<svg style="position:absolute;left:23.8px;top:371.9px;" width="4" height="5" viewBox="0 0 4 5"><path d="M0.8 0.5 L3.1 2.3 L0.8 4.1 Z" fill="#6A6A6A"/></svg>
<svg style="position:absolute;left:30.8px;top:371.3px;" width="6" height="6" viewBox="0 0 6 6"><path d="M3 0.4 L5.8 1.7 L5.8 4 L3 5.5 L0.2 4 L0.2 1.7 Z" fill="#1B5BB4"/><path d="M1.3 2.2 L3 3 L4.9 1.8" stroke="#E8F0FA" stroke-width="0.6" fill="none"/></svg>
<div class="t" style="left:41px;top:371.79px;font-size:6.70px;color:#1E1E1E;">span</div>
<div class="t" style="left:239.6px;top:371.79px;font-size:6.70px;color:#1E1E1E;">{00:00:30}</div>
<div class="t" style="left:566px;top:371.79px;font-size:6.70px;color:#1E1E1E;">System.TimeSpan</div>
<div style="position:absolute;left:17px;top:387.45px;width:653.5px;height:0.6px;background:#F2F2F2;"></div>
<svg style="position:absolute;left:23.8px;top:380.75px;" width="4" height="5" viewBox="0 0 4 5"><path d="M0.8 0.5 L3.1 2.3 L0.8 4.1 Z" fill="#6A6A6A"/></svg>
<svg style="position:absolute;left:30.8px;top:380.15000000000003px;" width="6" height="6" viewBox="0 0 6 6"><path d="M3 0.4 L5.8 1.7 L5.8 4 L3 5.5 L0.2 4 L0.2 1.7 Z" fill="#1B5BB4"/><path d="M1.3 2.2 L3 3 L4.9 1.8" stroke="#E8F0FA" stroke-width="0.6" fill="none"/></svg>
<div class="t" style="left:41px;top:380.64px;font-size:6.70px;color:#1E1E1E;">assembly</div>
<div class="t" style="left:239.6px;top:380.64px;font-size:6.70px;color:#1E1E1E;">{SCHotSpot, Version=1.0.0.0, Culture=neutral, PublicKeyToken=null}</div>
<div class="t" style="left:566px;top:380.64px;font-size:6.70px;color:#1E1E1E;">System.Reflection.Assembly {System...</div>
<div style="position:absolute;left:17px;top:396.29999999999995px;width:653.5px;height:0.6px;background:#F2F2F2;"></div>
<svg style="position:absolute;left:30.8px;top:389.0px;" width="6" height="6" viewBox="0 0 6 6"><path d="M3 0.4 L5.8 1.7 L5.8 4 L3 5.5 L0.2 4 L0.2 1.7 Z" fill="#1B5BB4"/><path d="M1.3 2.2 L3 3 L4.9 1.8" stroke="#E8F0FA" stroke-width="0.6" fill="none"/></svg>
<div class="t" style="left:41px;top:389.49px;font-size:6.70px;color:#1E1E1E;">name</div>
<div class="t" style="left:239.6px;top:389.49px;font-size:6.70px;color:#1E1E1E;">&quot;SCHotSpot&quot;</div>
<div class="t" style="left:566px;top:389.49px;font-size:6.70px;color:#1E1E1E;">string</div>
<div style="position:absolute;left:17px;top:405.15px;width:653.5px;height:0.6px;background:#F2F2F2;"></div>
<svg style="position:absolute;left:23.8px;top:398.45px;" width="4" height="5" viewBox="0 0 4 5"><path d="M0.8 0.5 L3.1 2.3 L0.8 4.1 Z" fill="#6A6A6A"/></svg>
<svg style="position:absolute;left:30.8px;top:397.85px;" width="6" height="6" viewBox="0 0 6 6"><path d="M3 0.4 L5.8 1.7 L5.8 4 L3 5.5 L0.2 4 L0.2 1.7 Z" fill="#1B5BB4"/><path d="M1.3 2.2 L3 3 L4.9 1.8" stroke="#E8F0FA" stroke-width="0.6" fill="none"/></svg>
<div class="t" style="left:41px;top:398.34px;font-size:6.70px;color:#1E1E1E;">myIcon</div>
<div class="t" style="left:239.6px;top:398.34px;font-size:6.70px;color:#1E1E1E;">null</div>
<div class="t" style="left:566px;top:398.34px;font-size:6.70px;color:#1E1E1E;">System.Drawing.Icon</div>
<div style="position:absolute;left:17px;top:414.0px;width:653.5px;height:0.6px;background:#F2F2F2;"></div>
<svg style="position:absolute;left:30.8px;top:406.70000000000005px;" width="6" height="6" viewBox="0 0 6 6"><path d="M3 0.4 L5.8 1.7 L5.8 4 L3 5.5 L0.2 4 L0.2 1.7 Z" fill="#1B5BB4"/><path d="M1.3 2.2 L3 3 L4.9 1.8" stroke="#E8F0FA" stroke-width="0.6" fill="none"/></svg>
<div class="t" style="left:41px;top:407.19px;font-size:6.70px;color:#1E1E1E;">myToast</div>
<div class="t" style="left:239.6px;top:407.19px;font-size:6.70px;color:#1E1E1E;">null</div>
<div class="t" style="left:566px;top:407.19px;font-size:6.70px;color:#1E1E1E;">VideoOS.Platform.Messaging.Smart...</div>
<svg style="position:absolute;left:549px;top:388.9px;" width="6" height="6" viewBox="0 0 6 6"><circle cx="2.5" cy="2.5" r="1.8" fill="none" stroke="#555" stroke-width="0.8"/><path d="M3.8 3.8 L5.5 5.5" stroke="#555" stroke-width="1"/></svg>
<svg style="position:absolute;left:557.8px;top:391.2px;" width="3" height="2" viewBox="0 0 3 2"><path d="M0 0 L3 0 L1.5 2 Z" fill="#555"/></svg>
<div style="position:absolute;left:17px;top:454px;width:30.7px;height:9.8px;background:#3E5499;"></div>
<div class="t" style="left:19.4px;top:456.79px;font-size:6.70px;color:#E8ECF7;">Call Stack</div>
<div style="position:absolute;left:48.5px;top:454px;width:38.0px;height:9.8px;background:#3E5499;"></div>
<div class="t" style="left:51.7px;top:456.79px;font-size:6.70px;color:#E8ECF7;">Breakpoints</div>
<div style="position:absolute;left:87.3px;top:454px;width:54.900000000000006px;height:9.8px;background:#3E5499;"></div>
<div class="t" style="left:90.4px;top:456.79px;font-size:6.70px;color:#E8ECF7;">Exception Settings</div>
<div style="position:absolute;left:143px;top:454px;width:58.7px;height:9.8px;background:#3E5499;"></div>
<div class="t" style="left:145.6px;top:456.79px;font-size:6.70px;color:#E8ECF7;">Command Window</div>
<div style="position:absolute;left:202.5px;top:454px;width:59.2px;height:9.8px;background:#3E5499;"></div>
<div class="t" style="left:203.8px;top:456.79px;font-size:6.70px;color:#E8ECF7;">Immediate Window</div>
<div style="position:absolute;left:262.5px;top:454px;width:26.2px;height:9.8px;background:#3E5499;"></div>
<div class="t" style="left:264.5px;top:456.79px;font-size:6.70px;color:#E8ECF7;">Output</div>
<div style="position:absolute;left:289.5px;top:454px;width:21.7px;height:9.8px;background:#3E5499;"></div>
<div class="t" style="left:291px;top:456.79px;font-size:6.70px;color:#E8ECF7;">Autos</div>
<div style="position:absolute;left:312px;top:454px;width:23.2px;height:9.8px;background:#FFFFFF;"></div>
<div class="t" style="left:314px;top:456.79px;font-size:6.70px;color:#1E1E1E;">Locals</div>
<div style="position:absolute;left:336px;top:454px;width:27.2px;height:9.8px;background:#3E5499;"></div>
<div class="t" style="left:338px;top:456.79px;font-size:6.70px;color:#E8ECF7;">Watch 1</div>
<div style="position:absolute;left:0px;top:467.8px;width:697px;height:12.2px;background:#A84A3D;"></div>
<svg style="position:absolute;left:2px;top:471px;" width="7" height="6" viewBox="0 0 7 6"><path d="M1.8 0.5 L6.5 0.5 L5.3 5.5 L0.5 5.5 Z" fill="none" stroke="#F3E0DC" stroke-width="0.8"/></svg>
<div class="t" style="left:14.7px;top:471.59px;font-size:6.70px;color:#FFFFFF;">Ready</div>
<svg style="position:absolute;left:578.5px;top:470.5px;" width="5" height="6" viewBox="0 0 5 6"><path d="M2.5 0.5 L2.5 5.5 M0.5 2.5 L2.5 0.5 L4.5 2.5" stroke="#fff" stroke-width="0.9" fill="none"/></svg>
<div class="t" style="left:589px;top:471.59px;font-size:6.70px;color:#FFFFFF;">Add to Source Control</div>
<svg style="position:absolute;left:652.5px;top:472px;" width="4" height="3" viewBox="0 0 4 3"><path d="M0 2.5 L2 0 L4 2.5 Z" fill="#fff"/></svg>
<svg style="position:absolute;left:668px;top:469.5px;" width="9" height="8" viewBox="0 0 9 8"><path d="M1 4 Q2 0.5 4 1.5 L4 5 Z" fill="#F3E0DC"/><circle cx="6" cy="5.5" r="2.4" fill="#F3E0DC"/></svg>
<svg style="position:absolute;left:690px;top:472px;" width="6" height="7" viewBox="0 0 6 7"><path d="M5.5 1 L1 5.5 M5.5 3.5 L3.5 5.5" stroke="#C98A80" stroke-width="0.8"/></svg>
<div style="position:absolute;left:453.8px;top:152px;width:208.2px;height:135.5px;background:#F5F7FC;border:0.8px solid #B0BAD8;box-sizing:border-box;box-shadow:0 0 1.5px rgba(0,0,0,0.12)"></div>
<div style="position:absolute;left:454.6px;top:152.8px;width:206.6px;height:12.2px;background:#CCD5F0;"></div>
<svg style="position:absolute;left:458px;top:145px;overflow:visible" width="10" height="9" viewBox="0 0 10 9"><path d="M1.9 1.7 L8 7.5 L1.9 7.5 Z" fill="#D5DCF2" stroke="#A9B3D6" stroke-width="0.5"/></svg>
<div style="position:absolute;left:460.2px;top:151.5px;width:5.5px;height:2px;background:#D0D8F1;"></div>
<div class="t" style="left:459.5px;top:157.29px;font-size:6.70px;color:#1E1E1E;">Exception User-Unhandled</div>
<svg style="position:absolute;left:642.5px;top:156.5px;" width="5" height="7" viewBox="0 0 5 7"><path d="M1 1 L4 1 M1.5 1 L1.5 4 L3.5 4 L3.5 1 M0.5 4 L4.5 4 M2.5 4 L2.5 6.5" stroke="#1E1E1E" stroke-width="0.7" fill="none"/></svg>
<svg style="position:absolute;left:651.5px;top:156.5px;" width="7" height="7" viewBox="0 0 7 7"><path d="M0.7 0.7 L6.3 6.3 M6.3 0.7 L0.7 6.3" stroke="#1E1E1E" stroke-width="1.2"/></svg>
<div class="t" style="left:459.5px;top:172.1px;font-size:6.7px;color:#1E1E1E;white-space:pre"><b>System.ArgumentException:</b> 'Value of 'null' is not valid for 'stream'.'</div>
<div style="position:absolute;left:457px;top:181.3px;width:200px;height:41.7px;background:#FCFCFE;border:0.8px solid #C8CCDA;box-sizing:border-box;overflow:hidden"></div>
<div style="position:absolute;left:457.8px;top:182px;width:192px;height:33px;overflow:hidden"><div class="t" style="left:2.8px;top:1.6px;font-size:6.7px;color:#1E1E1E">This exception was originally thrown at this call stack:</div><div class="t" style="left:9.1px;top:9.9px;font-size:6.7px;color:#1E1E1E">[External Code]</div><div class="t" style="left:9.1px;top:18.2px;font-size:6.7px;color:#1E1E1E">SCHotSpot.Background.SCHotSpotBackgroundPlugin.DoToast() in</div><div class="t" style="left:9.1px;top:26.4px;font-size:6.7px;color:#1E1E1E">SCHotSpot.Background.SCHotSpotBackgroundPlugin.ViewItemSelected</div></div>
<div style="position:absolute;left:650px;top:182px;width:6.2px;height:33px;background:#F0F0F3;"></div>
<svg style="position:absolute;left:651px;top:183px;" width="4" height="3" viewBox="0 0 4 3"><path d="M0 2.5 L2 0 L4 2.5 Z" fill="#868999"/></svg>
<div style="position:absolute;left:651px;top:188.5px;width:4px;height:12px;background:#C2C3C9;"></div>
<svg style="position:absolute;left:651px;top:207.5px;" width="4" height="3" viewBox="0 0 4 3"><path d="M0 0 L2 2.5 L4 0 Z" fill="#868999"/></svg>
<div style="position:absolute;left:457.8px;top:215px;width:192.2px;height:5.6px;background:#F0F0F3;"></div>
<svg style="position:absolute;left:459.5px;top:216px;" width="3" height="4" viewBox="0 0 3 4"><path d="M2.5 0 L0 2 L2.5 4 Z" fill="#868999"/></svg>
<div style="position:absolute;left:463.5px;top:216.2px;width:69px;height:3.5px;background:#C2C3C9;"></div>
<svg style="position:absolute;left:644.5px;top:216px;" width="3" height="4" viewBox="0 0 3 4"><path d="M0 0 L2.5 2 L0 4 Z" fill="#868999"/></svg>
<div class="t" style="left:459.2px;top:229.39px;font-size:6.70px;color:#3470C4;">View Details</div>
<div style="position:absolute;left:496px;top:228px;width:0.6px;height:7.5px;background:#C8CDE0;"></div>
<div class="t" style="left:499.7px;top:229.39px;font-size:6.70px;color:#3470C4;">Copy Details</div>
<div style="position:absolute;left:537.7px;top:228px;width:0.6px;height:7.5px;background:#C8CDE0;"></div>
<div class="t" style="left:540.7px;top:229.39px;font-size:6.70px;color:#3470C4;">Start Live Share session...</div>
<svg style="position:absolute;left:460.5px;top:240.5px;" width="4" height="4" viewBox="0 0 4 4"><path d="M3.5 0.5 L3.5 3.5 L0.5 3.5 Z" fill="#1E1E1E"/></svg>
<div class="t" style="left:465.8px;top:240.79px;font-size:6.70px;color:#1E1E1E;">Exception Settings</div>
<div style="position:absolute;left:466.3px;top:248.8px;width:6.2px;height:6.2px;background:#FFFFFF;border:0.7px solid #808080;box-sizing:border-box"></div>
<svg style="position:absolute;left:466.8px;top:249.3px;" width="5" height="5" viewBox="0 0 5 5"><path d="M0.8 2.6 L2 3.9 L4.3 1" stroke="#1E1E1E" stroke-width="0.9" fill="none"/></svg>
<div class="t" style="left:475px;top:249.39px;font-size:6.70px;color:#1E1E1E;">Break when this exception type is user-unhandled</div>
<div class="t" style="left:475px;top:258.09px;font-size:6.70px;color:#1E1E1E;">Except when thrown from:</div>
<div style="position:absolute;left:475.4px;top:266.3px;width:6px;height:6px;background:#FFFFFF;border:0.7px solid #808080;box-sizing:border-box"></div>
<div class="t" style="left:484.2px;top:267.09px;font-size:6.70px;color:#1E1E1E;">SCHotSpot.dll</div>
<div class="t" style="left:466.5px;top:276.29px;font-size:6.70px;color:#3470C4;">Open Exception Settings</div>
<div style="position:absolute;left:537.7px;top:275px;width:0.6px;height:7.5px;background:#C8CDE0;"></div>
<div class="t" style="left:540.7px;top:276.29px;font-size:6.70px;color:#3470C4;">Edit Conditions</div>
<svg style="position:absolute;left:655px;top:281px;" width="5" height="5" viewBox="0 0 5 5"><path d="M4.5 0.5 L0.5 4.5 M4.5 2.5 L2.5 4.5" stroke="#A8AEC2" stroke-width="0.7"/></svg>
</div></body></html>
